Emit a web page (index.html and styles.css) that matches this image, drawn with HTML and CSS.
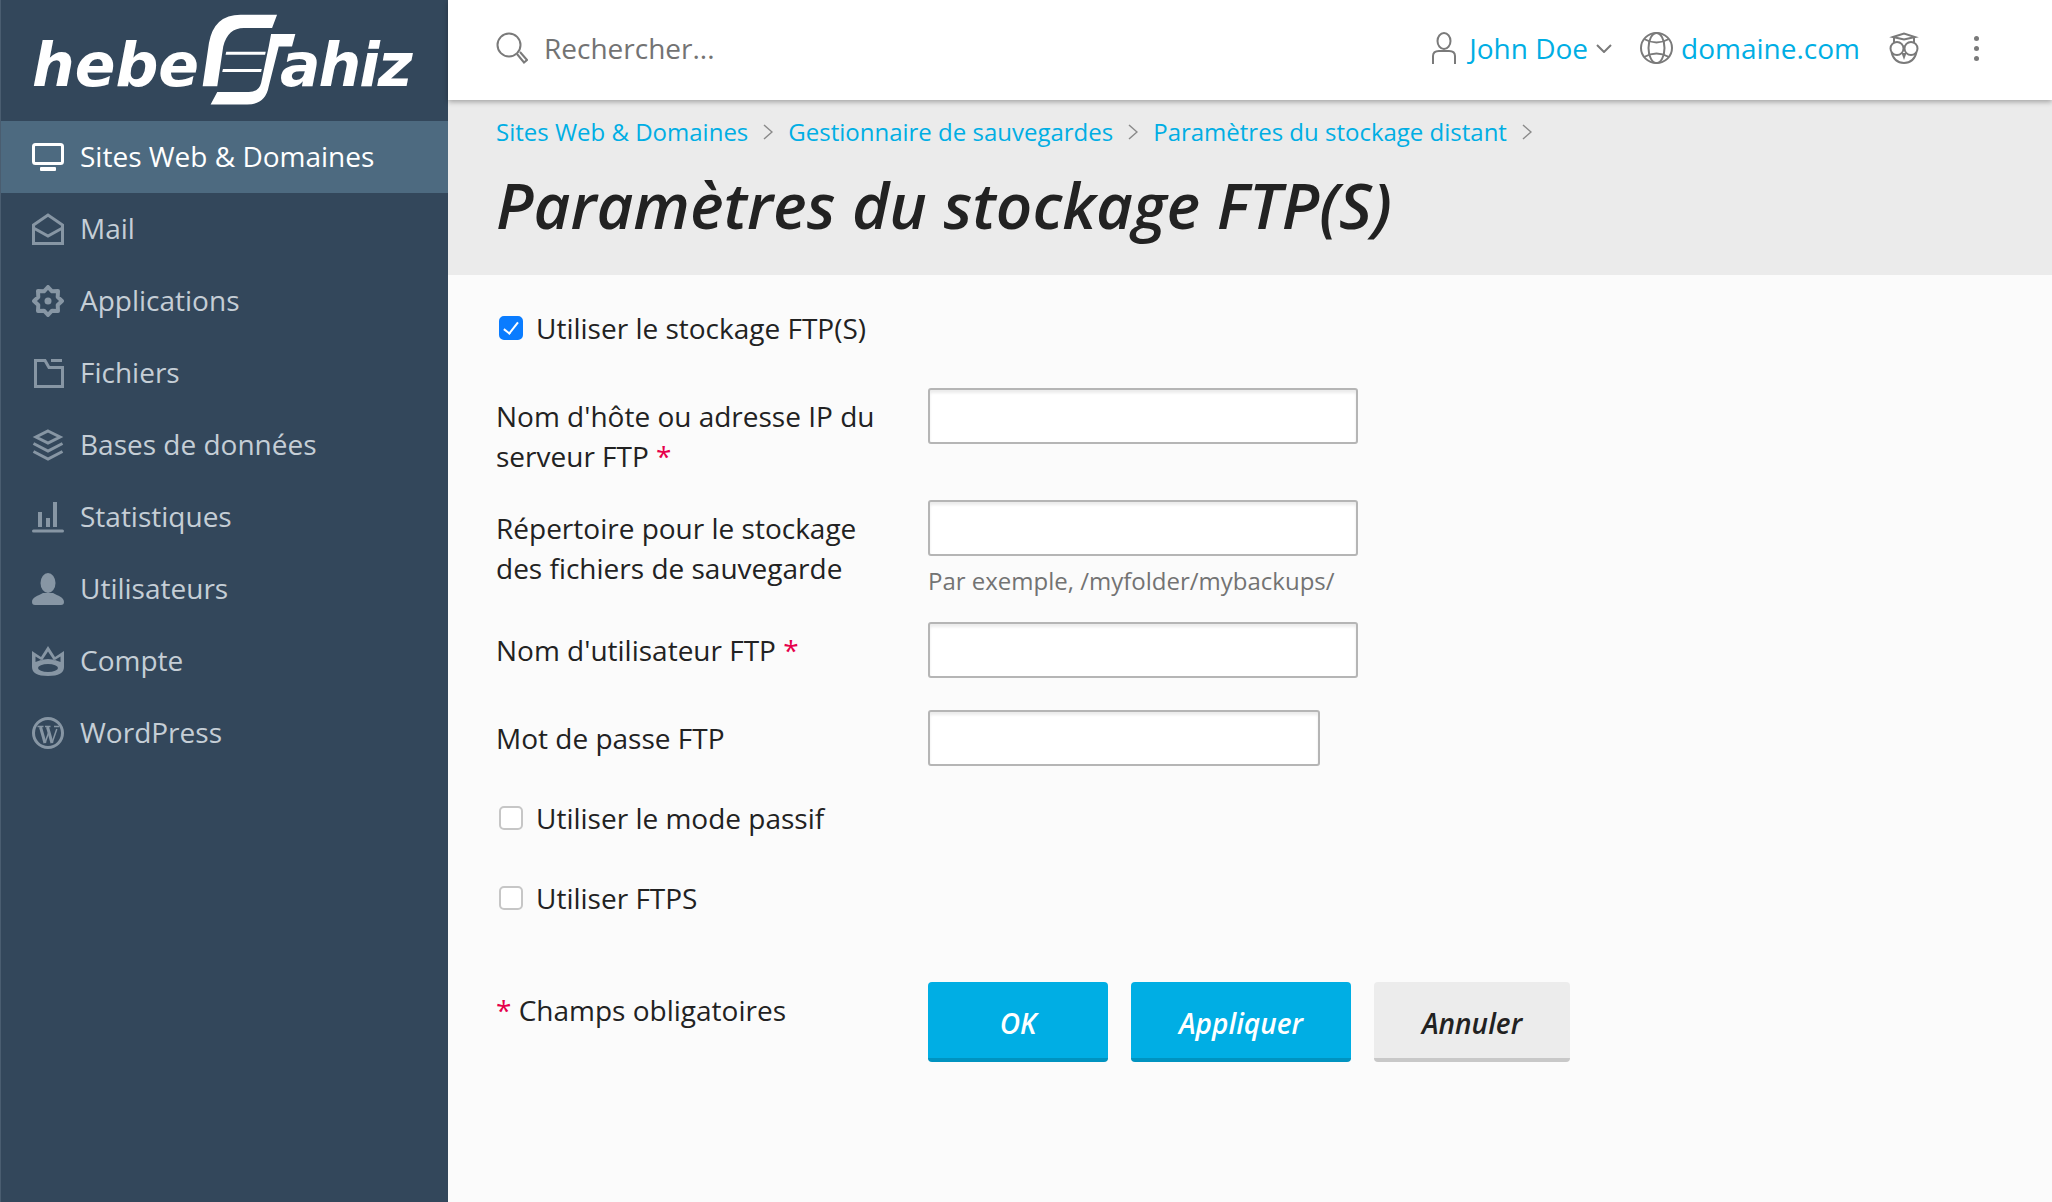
FILE: index.html
```html
<!DOCTYPE html>
<html lang="fr">
<head>
    <meta charset="UTF-8">
    <meta name="viewport" content="width=device-width, initial-scale=1.0">
    <title>Paramètres du stockage FTP(S)</title>
    <link rel="stylesheet" href="styles.css">
</head>
<body>
    <div class="app">
        <aside class="sidebar">
            <div class="logo">
                <span class="logo-text">hebe</span>
                <svg class="logo-mark" viewBox="580 40 310 285" width="103" height="95">
                    <path d="M830 45L815 85H730Q682 85 668 140L650 260H606L625 130Q640 45 720 45Z"/>
                    <path d="M885 103L875 140H835L805 260Q795 315 740 315H630L650 277H745Q775 277 782 250L805 140L812 103Z"/>
                    <path d="M677 156H796L794 165H675Z"/>
                    <path d="M667 208H784L782 217H665Z"/>
                </svg>
                <span class="logo-text logo-end">ahiz</span>
            </div>
            <nav class="nav">
                <a href="#" class="nav-item active">
                    <svg class="nav-icon" viewBox="0 0 32 32"><rect class="line" x="1.5" y="3.5" width="29" height="19" rx="2"/><rect x="8" y="26" width="16" height="4" rx="1"/></svg>
                    <span class="nav-label">Sites Web &amp; Domaines</span>
                </a>
                <a href="#" class="nav-item">
                    <svg class="nav-icon" viewBox="0 0 32 32"><path class="line" d="M1.5 12L16 2L30.5 12V30.5H1.5Z"/><path class="line" d="M1.5 15L16 23L30.5 15"/></svg>
                    <span class="nav-label">Mail</span>
                </a>
                <a href="#" class="nav-item">
                    <svg class="nav-icon" viewBox="0 0 32 32"><path class="line line-gear" d="M30 16L25.700 20L26 26L20 25.700L16 30L12 25.700L6 26L6.300 20L2 16L6.300 12L6 6L12 6.300L16 2L20 6.300L26 6L25.700 12Z"/><circle cx="16" cy="16" r="3.500"/></svg>
                    <span class="nav-label">Applications</span>
                </a>
                <a href="#" class="nav-item">
                    <svg class="nav-icon" viewBox="0 0 32 32"><path class="line" d="M3.5 3.5H13L17 10.5H30.5V29.5H3.5Z"/><rect x="19" y="2" width="11" height="3"/></svg>
                    <span class="nav-label">Fichiers</span>
                </a>
                <a href="#" class="nav-item">
                    <svg class="nav-icon" viewBox="0 0 32 32"><path class="line" d="M16 2L28 8L16 14L4 8Z"/><path class="line" d="M1.5 14.5L16 22L30.5 14.5"/><path class="line" d="M1.5 22.5L16 30L30.5 22.5"/></svg>
                    <span class="nav-label">Bases de données</span>
                </a>
                <a href="#" class="nav-item">
                    <svg class="nav-icon" viewBox="0 0 32 32"><rect x="6" y="11" width="4" height="15"/><rect x="14" y="17" width="4" height="9"/><rect x="21" y="1" width="4" height="25"/><rect x="0" y="28.5" width="32" height="3" rx="1.5"/></svg>
                    <span class="nav-label">Statistiques</span>
                </a>
                <a href="#" class="nav-item">
                    <svg class="nav-icon" viewBox="0 0 32 32"><ellipse cx="16" cy="10" rx="7.5" ry="10"/><path d="M0 29C0 24 6 23 11 20H21C26 23 32 24 32 29Q32 32 29 32H3Q0 32 0 29Z"/></svg>
                    <span class="nav-label">Utilisateurs</span>
                </a>
                <a href="#" class="nav-item">
                    <svg class="nav-icon" viewBox="0 0 32 32"><path fill-rule="evenodd" d="M0 6L9 12L16 1L23 12L32 6V22Q32 31 16 31Q0 31 0 22ZM6 23a10 4 0 1 0 20 0a10 4 0 1 0 -20 0ZM3.5 11.500L10 15.500L16 6.500L22 15.500L28.500 11.500V17Q16 11 3.500 17Z"/></svg>
                    <span class="nav-label">Compte</span>
                </a>
                <a href="#" class="nav-item">
                    <svg class="nav-icon" viewBox="0 0 32 32"><circle class="line" cx="16" cy="16" r="14.5"/><path class="line" d="M8.500 10L13 26M15.500 10L20 26"/><path class="line line-thin" d="M13 26L16.500 16M20 26L24.800 12M5.500 9.500H11.500M13 9.500H18.500M22 9.500H27"/></svg>
                    <span class="nav-label">WordPress</span>
                </a>
            </nav>
        </aside>

        <div class="main">
            <header class="topbar">
                <div class="search">
                    <svg class="top-icon" width="32" height="32" viewBox="0 0 32 32"><circle cx="13" cy="13" r="11.5"/><path d="M21 22L28 30.5L31 28L24 20"/></svg>
                    <span>Rechercher...</span>
                </div>
                <a href="#" class="top-link user-link">
                    <svg class="top-icon" width="24" height="32" viewBox="0 0 24 32"><ellipse cx="12" cy="9" rx="6.5" ry="8"/><path d="M1 32V24Q1 19 7 19H17Q23 19 23 24V32"/></svg>
                    <span>John Doe</span>
                    <svg class="top-icon caret" width="16" height="9" viewBox="0 0 16 9"><path d="M1 1L8 8L15 1"/></svg>
                </a>
                <a href="#" class="top-link domain-link">
                    <svg class="top-icon" width="33" height="32" viewBox="0 0 33 32"><ellipse cx="16.500" cy="16" rx="15.500" ry="15"/><ellipse cx="16.500" cy="16" rx="8" ry="15"/><path d="M4 7Q16.500 14 29 7M4 25Q16.500 18 29 25"/></svg>
                    <span>domaine.com</span>
                </a>
                <svg class="top-icon owl" width="30" height="32" viewBox="0 0 30 32"><path d="M4 5L15 1.500L26 5L15 7.500Z"/><path d="M5 6V11M25 6V11"/><circle cx="8" cy="16.500" r="6.500"/><circle cx="22" cy="16.500" r="6.500"/><path d="M2.500 20Q5 31 15 31Q25 31 27.500 20"/><path class="owl-nose" d="M12.500 21H17.500L15 28Z"/></svg>
                <div class="more">
                    <span class="dot"></span>
                    <span class="dot"></span>
                    <span class="dot"></span>
                </div>
            </header>

            <div class="page-head">
                <div class="breadcrumb">
                    <a href="#">Sites Web &amp; Domaines</a>
                    <svg class="crumb-sep" width="10" height="16" viewBox="0 0 10 16"><path d="M1 1L9 8L1 15"/></svg>
                    <a href="#">Gestionnaire de sauvegardes</a>
                    <svg class="crumb-sep" width="10" height="16" viewBox="0 0 10 16"><path d="M1 1L9 8L1 15"/></svg>
                    <a href="#">Paramètres du stockage distant</a>
                    <svg class="crumb-sep" width="10" height="16" viewBox="0 0 10 16"><path d="M1 1L9 8L1 15"/></svg>
                </div>
                <h1>Paramètres du stockage FTP(S)</h1>
            </div>

            <form class="form">
                <label class="check-row first-check">
                    <input type="checkbox" checked>
                    Utiliser le stockage FTP(S)
                </label>

                <div class="row row-host">
                    <label class="row-label">Nom d'hôte ou adresse IP du serveur FTP <span class="req">*</span></label>
                    <div><input type="text" class="field"></div>
                </div>
                <div class="row row-dir">
                    <label class="row-label">Répertoire pour le stockage des fichiers de sauvegarde</label>
                    <div>
                        <input type="text" class="field">
                        <div class="hint">Par exemple, /myfolder/mybackups/</div>
                    </div>
                </div>
                <div class="row row-user">
                    <label class="row-label">Nom d'utilisateur FTP <span class="req">*</span></label>
                    <div><input type="text" class="field"></div>
                </div>
                <div class="row row-pass">
                    <label class="row-label">Mot de passe FTP</label>
                    <div><input type="password" class="field field-short"></div>
                </div>

                <label class="check-row passive-check">
                    <input type="checkbox">
                    Utiliser le mode passif
                </label>
                <label class="check-row ftps-check">
                    <input type="checkbox">
                    Utiliser FTPS
                </label>

                <div class="row row-actions">
                    <div class="row-label"><span class="req">*</span> Champs obligatoires</div>
                    <div class="actions">
                        <button type="button" class="btn btn-primary btn-ok">OK</button>
                        <button type="button" class="btn btn-primary btn-apply">Appliquer</button>
                        <button type="button" class="btn btn-cancel">Annuler</button>
                    </div>
                </div>
            </form>
        </div>
    </div>
</body>
</html>
```

FILE: styles.css
```css
* {
    margin: 0;
    padding: 0;
    box-sizing: border-box;
}
html, body {
    height: 100%;
    overflow: hidden;
}
body {
    font-family: "Open Sans", "Noto Sans", sans-serif;
    font-size: 28px;
    line-height: 40px;
    color: #222;
    background-color: #fbfbfb;
}
a {
    text-decoration: none;
}
.app {
    display: flex;
    height: 100%;
}

/* sidebar */
.sidebar {
    width: 448px;
    flex-shrink: 0;
    background-color: #33475b;
    border-left: 1px solid #4a5d70;
}
.logo {
    height: 121px;
    display: flex;
    align-items: flex-start;
    padding-left: 31px;
    color: #fff;
}
.logo-text {
    font-family: "DejaVu Sans", sans-serif;
    font-size: 60px;
    line-height: 72px;
    font-weight: 700;
    font-style: italic;
    margin-top: 29px;
}
.logo-end {
    letter-spacing: -2px;
}
.logo-mark {
    margin-top: 13px;
    margin-left: -5px;
    margin-right: -17px;
    fill: #fff;
    flex-shrink: 0;
}
.nav-item {
    height: 72px;
    display: flex;
    align-items: center;
    gap: 16px;
    padding-left: 31px;
    color: #c5ced6;
}
.nav-label {
    margin-top: -2px;
}
.nav-item.active {
    color: #fff;
    background-color: #4d6a80;
}
.nav-icon {
    width: 32px;
    height: 32px;
    flex-shrink: 0;
    fill: #8796a4;
}
.active .nav-icon {
    fill: #fff;
}
.nav-icon .line {
    fill: none;
    stroke: #8796a4;
    stroke-width: 3;
}
.active .nav-icon .line {
    stroke: #fff;
}
.nav-icon .line-gear {
    stroke-width: 4;
    stroke-linejoin: round;
}
.nav-icon .line-thin {
    stroke-width: 1.5;
}

/* top bar */
.main {
    flex: 1;
    min-width: 0;
}
.topbar {
    height: 100px;
    display: flex;
    align-items: center;
    padding-left: 48px;
    padding-bottom: 4px;
    background-color: #fff;
    box-shadow: 0 2px 5px rgba(0, 0, 0, 0.3);
    position: relative;
}
.top-icon {
    fill: none;
    stroke: #7a7a7a;
    stroke-width: 2;
    flex-shrink: 0;
}
.owl-nose {
    fill: #7a7a7a;
    stroke: none;
}
.search {
    flex: 1;
    display: flex;
    align-items: center;
    gap: 16px;
    color: #737373;
}
.top-link {
    display: flex;
    align-items: center;
    color: #00aee4;
}
.user-link {
    gap: 13px;
}
.caret {
    margin-left: -5px;
}
.domain-link {
    gap: 8px;
    margin-left: 28px;
}
.owl {
    margin-left: 29px;
}
.more {
    width: 5px;
    display: flex;
    flex-direction: column;
    gap: 5px;
    margin-left: 55px;
    margin-right: 73px;
}
.dot {
    width: 5px;
    height: 5px;
    border-radius: 50%;
    background-color: #7a7a7a;
}

/* page head */
.page-head {
    height: 175px;
    padding: 12px 48px 0;
    background-color: #ebebeb;
}
.breadcrumb {
    display: flex;
    align-items: center;
    font-size: 24px;
    line-height: 40px;
}
.breadcrumb a {
    color: #00aee4;
}
.crumb-sep {
    margin: 0 15px;
    fill: none;
    stroke: #8a8a8a;
    stroke-width: 1.500;
}
h1 {
    font-size: 63.7px;
    line-height: 84px;
    font-weight: 600;
    font-style: italic;
    margin-top: 11px;
    color: #222;
}

/* form */
.form {
    padding: 33px 48px 0;
}
.check-row {
    display: flex;
    align-items: center;
    gap: 13px;
    padding-left: 3px;
}
.check-row input {
    appearance: none;
    position: relative;
    width: 24px;
    height: 24px;
    flex-shrink: 0;
    border: 2px solid #c6c6c6;
    border-radius: 5px;
    background-color: #fff;
}
.check-row input:checked {
    border-color: #0a7cff;
    background-color: #0a7cff;
}
.check-row input:checked::after {
    content: "";
    position: absolute;
    left: 6px;
    top: 1px;
    width: 6px;
    height: 13px;
    border: solid #fff;
    border-width: 0 2.500px 2.500px 0;
    transform: rotate(38deg);
}
.row {
    display: grid;
    grid-template-columns: 432px 1fr;
}
.row-label {
    padding-top: 8px;
    padding-right: 40px;
}
.req {
    color: #e6004c;
}
.field {
    display: block;
    width: 430px;
    height: 56px;
    border: 2px solid #b5b5b5;
    border-radius: 3px;
    background-color: #fff;
    box-shadow: inset 0 3px 3px rgba(0, 0, 0, 0.08);
}
.field-short {
    width: 392px;
}
.hint {
    font-size: 24px;
    line-height: 33px;
    margin-top: 8px;
    padding-bottom: 1px;
    color: #737373;
}
.row-host {
    margin-top: 40px;
}
.row-dir {
    margin-top: 24px;
}
.row-user {
    margin-top: 24px;
}
.row-pass {
    margin-top: 32px;
}
.passive-check {
    margin-top: 32px;
}
.ftps-check {
    margin-top: 40px;
}
.row-actions {
    margin-top: 64px;
}
.actions {
    display: flex;
    gap: 23px;
}
.btn {
    height: 80px;
    padding-top: 6px;
    border: none;
    border-radius: 4px;
    font-family: inherit;
    font-size: 28px;
    font-weight: 600;
    font-style: italic;
    cursor: pointer;
}
.btn-primary {
    color: #fff;
    background-color: #00aee4;
    border-bottom: 4px solid #0093c0;
}
.btn-ok {
    width: 180px;
}
.btn-apply {
    width: 220px;
}
.btn-cancel {
    width: 196px;
    color: #222;
    background-color: #ececec;
    border-bottom: 4px solid #c8c8c8;
}
```
